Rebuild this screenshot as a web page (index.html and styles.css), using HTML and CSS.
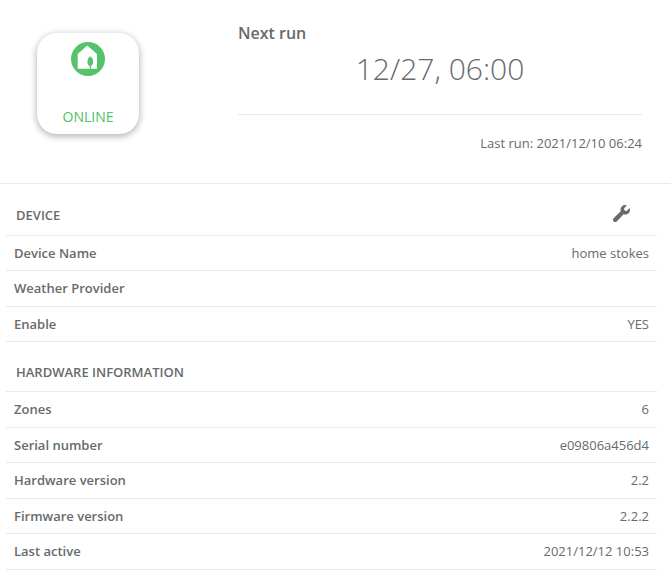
FILE: index.html
```html
<!DOCTYPE html>
<html lang="en">
<head>
<meta charset="utf-8">
<title>Device</title>
<link rel="stylesheet" href="styles.css">
</head>
<body>
<section class="top">
  <div class="status-col">
    <div class="status-card">
      <svg class="status-icon" viewBox="0 0 34 34" aria-hidden="true">
        <circle cx="17" cy="17" r="17" fill="#56c26a"/>
        <path d="M16.2 3.6 L26 12 V26.8 H6.7 V12 Z" fill="#fff"/>
        <path d="M19.3 14.2 C22.8 16.8 23.2 22.2 19.9 24 V26.8 H18.7 V24 C15.4 22.2 15.8 16.8 19.3 14.2 Z" fill="#56c26a"/>
      </svg>
      <span class="status-label">ONLINE</span>
    </div>
  </div>
  <div class="run-col">
    <h2 class="run-title">Next run</h2>
    <div class="run-time">12/27, 06:00</div>
    <div class="run-last">Last run: 2021/12/10 06:24</div>
  </div>
</section>
<section class="info">
  <div class="head head-device">
    <span>DEVICE</span>
    <svg class="wrench" viewBox="0 0 512 512" aria-hidden="true">
      <path d="M507.7 109.1c-2.200-9-13.500-12.100-20.100-5.500l-74.400 74.400-67.900-11.300-11.300-67.900 74.400-74.400c6.600-6.600 3.400-17.900-5.700-20.200-47.400-11.700-99.600.9-136.600 37.900-39.600 39.600-50.600 97.100-34 147.200L18.700 402.800c-25 25-25 65.500 0 90.500s65.500 25 90.500 0l213.200-213.200c50.100 16.700 107.500 5.600 147.400-34.300 37.100-37.100 49.700-89.300 37.900-136.700z" fill="#6b6b6b"/>
    </svg>
  </div>
  <div class="row"><b>Device Name</b><span>home stokes</span></div>
  <div class="row"><b>Weather Provider</b><span></span></div>
  <div class="row"><b>Enable</b><span>YES</span></div>
  <div class="head head-hw"><span>HARDWARE INFORMATION</span></div>
  <div class="row"><b>Zones</b><span>6</span></div>
  <div class="row"><b>Serial number</b><span>e09806a456d4</span></div>
  <div class="row"><b>Hardware version</b><span>2.2</span></div>
  <div class="row"><b>Firmware version</b><span>2.2.2</span></div>
  <div class="row"><b>Last active</b><span>2021/12/12 10:53</span></div>
</section>
</body>
</html>
```
FILE: styles.css
```css
* { box-sizing: border-box; }
html, body { margin: 0; padding: 0; background: #fff; }
body {
  font-family: "Open Sans", sans-serif;
  font-size: 13px;
  line-height: 18.57px;
  color: #676a6c;
  overflow: hidden;
}
.top {
  display: flex;
  height: 184px;
  border-bottom: 1px solid #e7eaec;
}
.status-col { width: 238px; padding: 33px 0 0 37px; }
.status-card {
  width: 102px;
  height: 101px;
  border-radius: 20px;
  background: #fff;
  box-shadow: 0 2px 6px 1px rgba(0, 0, 0, .27);
  display: flex;
  flex-direction: column;
  align-items: center;
  padding-top: 9px;
}
.status-icon { width: 34px; height: 34px; display: block; }
.status-label { margin-top: 32px; font-size: 14px; color: #50c164; }
.run-col { width: 404px; padding-top: 23px; }
.run-title { margin: 0; font-size: 16px; line-height: 20px; font-weight: 600; color: #676a6c; }
.run-time {
  margin-top: 3px;
  height: 69px;
  border-bottom: 1px solid #e7eaec;
  text-align: center;
  font-size: 30px;
  line-height: 46px;
  font-weight: 300;
}
.run-last { margin-top: 19px; text-align: right; }
.info { padding: 0 14px 0 6px; }
.head {
  display: flex;
  justify-content: space-between;
  align-items: center;
  padding: 0 27px 0 10px;
  font-weight: 600;
  border-bottom: 1px solid #e7eaec;
}
.head-device { height: 51.6px; padding-top: 11px; }
.head-hw { height: 49.85px; padding-top: 11px; }
.wrench { width: 17px; height: 17px; display: block; margin-top: -3px; }
.row {
  display: flex;
  justify-content: space-between;
  height: 35.57px;
  padding: 8px;
  border-bottom: 1px solid #e7eaec;
}
.row b { font-weight: 600; }
```
